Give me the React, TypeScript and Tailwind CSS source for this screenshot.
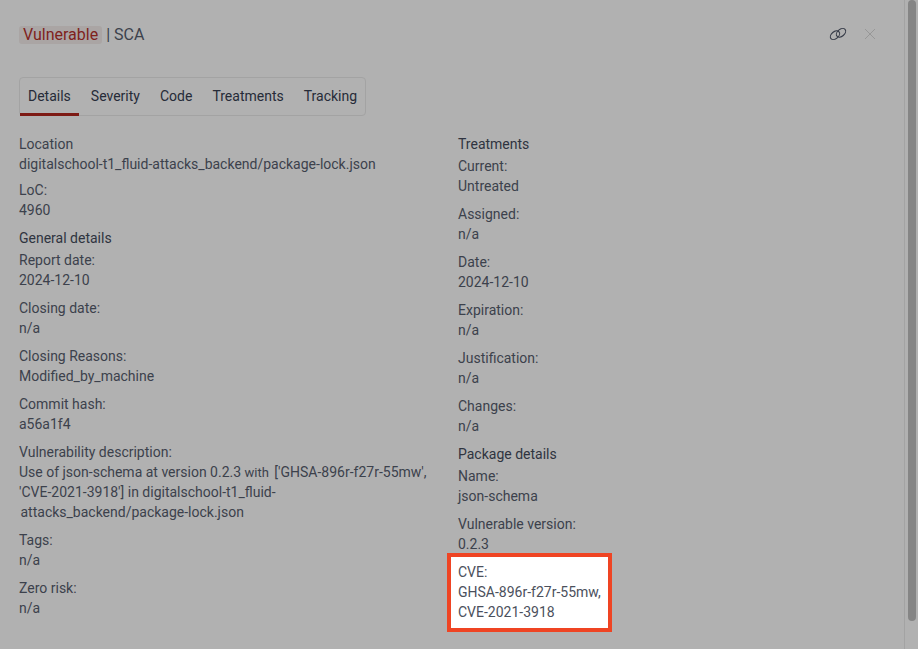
const Field = ({ label, children, className = "" }: { label: string; children: React.ReactNode; className?: string }) => (
  <div className={className}>
    <p>{label}</p>
    <div>{children}</div>
  </div>
);

const tabs = ["Details", "Severity", "Code", "Treatments", "Tracking"];

export default function App() {
  return (
    <div className="flex h-[649px] w-[918px] overflow-hidden bg-[#b1b1b1] font-['Roboto',sans-serif] text-[14px] leading-[20px] text-[#3c414c]">
      <main className="min-w-0 flex-1 pl-[19px] pr-[28px] pt-[24px]">
        <header className="flex h-[20px] items-center justify-between">
          <h1 className="flex items-center pt-[1px] text-[16px] leading-[18px]">
            <span className="rounded-[3px] bg-[#aaa5a4] px-[4px] text-[#7f221c]">Vulnerable</span>
            <span className="ml-[4px]">| SCA</span>
          </h1>
          <div className="flex items-center gap-[16px]">
            <svg width="20" height="16" viewBox="0 0 20 16" fill="none" stroke="#353a47" strokeWidth="1.1">
              <ellipse cx="7" cy="9.2" rx="5.3" ry="3.5" transform="rotate(-40 7 9.2)" />
              <ellipse cx="13" cy="6.8" rx="5.3" ry="3.5" transform="rotate(-40 13 6.8)" />
            </svg>
            <svg width="12" height="12" viewBox="0 0 12 12" stroke="#979797" strokeWidth="1">
              <path d="M1 1l10 10M11 1L1 11" />
            </svg>
          </div>
        </header>

        <nav className="mt-[33px] flex h-[39px] w-[347px] gap-[4px] rounded-[4px] border border-[#a3a3a3] text-[#262b38]">
          {tabs.map((t, i) => (
            <div
              key={t}
              className={`flex h-[38px] items-center border-b-[3px] px-[8px] pt-[1px] ${i === 0 ? "border-[#7d1a14]" : "border-transparent"}`}
            >
              {t}
            </div>
          ))}
        </nav>

        <div className="mt-[18px] flex">
          <section className="flex w-[439px] flex-col pr-[20px]">
            <Field label="Location">digitalschool-t1_fluid-attacks_backend/package-lock.json</Field>
            <Field label="LoC:" className="mt-[6px]">4960</Field>
            <h2 className="mt-[8px] text-[#2f3440]">General details</h2>
            <div className="mt-[2px] flex flex-col gap-[8px]">
              <Field label="Report date:">2024-12-10</Field>
              <Field label="Closing date:">n/a</Field>
              <Field label="Closing Reasons:">Modified_by_machine</Field>
              <Field label="Commit hash:">a56a1f4</Field>
              <Field label="Vulnerability description:">
                <p>
                  Use of json-schema at version 0.2.3 <span className="pr-[2px] text-[13px] leading-[1]">with</span> ['GHSA-896r-f27r-55mw',
                </p>
                <p>'CVE-2021-3918'] in digitalschool-t1_fluid-</p>
                <p className="pl-[1.5px]">attacks_backend/package-lock.json</p>
              </Field>
              <Field label="Tags:">n/a</Field>
              <Field label="Zero risk:">n/a</Field>
            </div>
          </section>
          <section className="flex flex-1 flex-col">
            <h2 className="text-[#2f3440]">Treatments</h2>
            <div className="mt-[2px] flex flex-col gap-[8px]">
              <Field label="Current:">Untreated</Field>
              <Field label="Assigned:">n/a</Field>
              <Field label="Date:">2024-12-10</Field>
              <Field label="Expiration:">n/a</Field>
              <Field label="Justification:">n/a</Field>
              <Field label="Changes:">n/a</Field>
            </div>
            <h2 className="mt-[8px] text-[#2f3440]">Package details</h2>
            <div className="mt-[2px] flex flex-col gap-[8px]">
              <Field label="Name:">json-schema</Field>
              <Field label="Vulnerable version:">0.2.3</Field>
            </div>
            <div className="ml-[-11px] mt-[-1px] w-[165px] border-[4px] border-[#ef4423] bg-white pb-[6px] pl-[7px] pt-[5px] text-[#4b505c]">
              <p>CVE:</p>
              <p>GHSA-896r-f27r-55mw,</p>
              <p>CVE-2021-3918</p>
            </div>
          </section>
        </div>
      </main>
      <aside className="h-full w-[14px] border-l border-[#a3a3a3] pl-[3px] pr-[2px]">
        <div className="h-[621px] rounded-[4px] bg-[#858585]" />
      </aside>
    </div>
  );
}
